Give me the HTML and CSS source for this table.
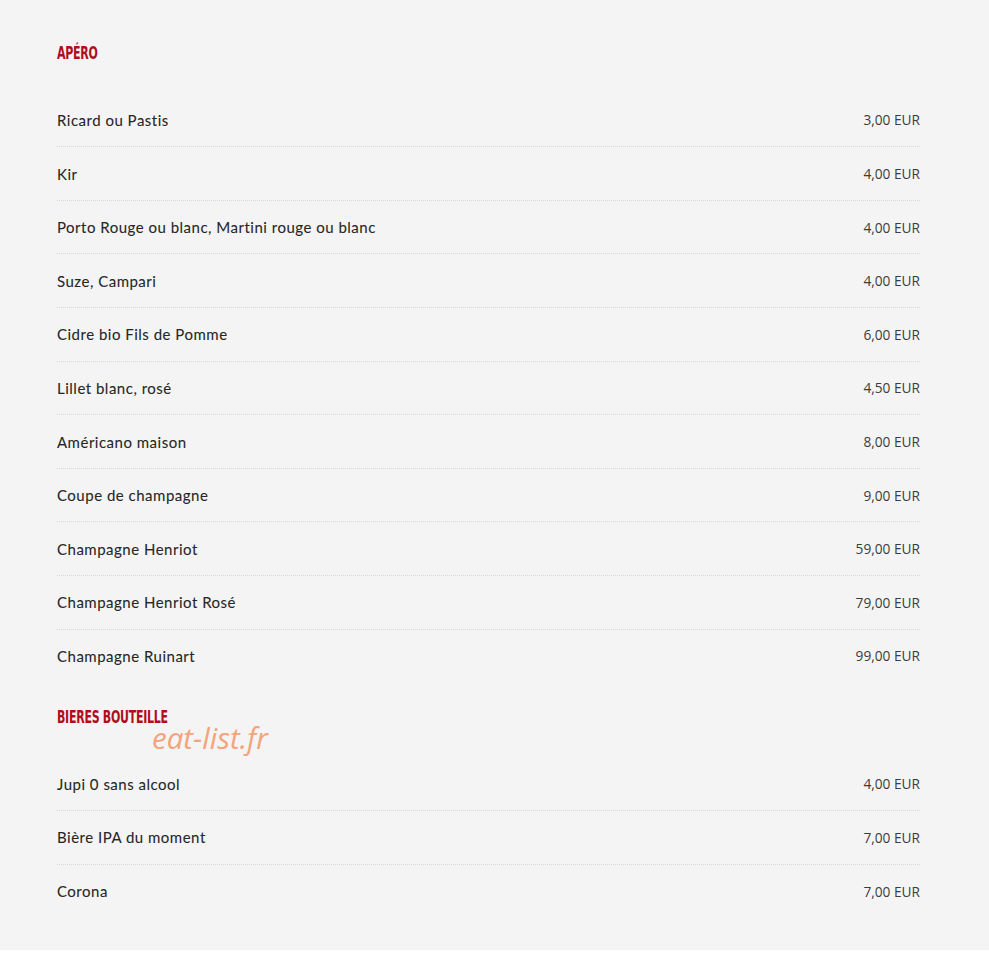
FILE: index.html
```html
<!DOCTYPE html>
<html lang="fr">
<head>
  <meta charset="UTF-8">
  <title>Carte - Apéro</title>
  <link rel="stylesheet" href="styles.css">
</head>
<body>

<div class="carte">
  <h3 class="categorie">APÉRO</h3>
  <ul class="liste">
    <li><span class="nom">Ricard ou Pastis</span><span class="prix">3,00 EUR</span></li>
    <li><span class="nom">Kir</span><span class="prix">4,00 EUR</span></li>
    <li><span class="nom">Porto Rouge ou blanc, Martini rouge ou blanc</span><span class="prix">4,00 EUR</span></li>
    <li><span class="nom">Suze, Campari</span><span class="prix">4,00 EUR</span></li>
    <li><span class="nom">Cidre bio Fils de Pomme</span><span class="prix">6,00 EUR</span></li>
    <li><span class="nom">Lillet blanc, rosé</span><span class="prix">4,50 EUR</span></li>
    <li><span class="nom">Américano maison</span><span class="prix">8,00 EUR</span></li>
    <li><span class="nom">Coupe de champagne</span><span class="prix">9,00 EUR</span></li>
    <li><span class="nom">Champagne Henriot</span><span class="prix">59,00 EUR</span></li>
    <li><span class="nom">Champagne Henriot Rosé</span><span class="prix">79,00 EUR</span></li>
    <li><span class="nom">Champagne Ruinart</span><span class="prix">99,00 EUR</span></li>
  </ul>

  <div class="bloc">
    <h3 class="categorie">BIERES BOUTEILLE</h3>
    <span class="filigrane">eat-list.fr</span>
  </div>
  <ul class="liste">
    <li><span class="nom">Jupi 0 sans alcool</span><span class="prix">4,00 EUR</span></li>
    <li><span class="nom">Bière IPA du moment</span><span class="prix">7,00 EUR</span></li>
    <li><span class="nom">Corona</span><span class="prix">7,00 EUR</span></li>
  </ul>
</div>

</body>
</html>
```

FILE: styles.css
```css
body { margin: 0; background: #fff; }
.carte { background: #f4f4f4; padding: 43px 69px 33px 57px; }
.categorie { margin: 0 0 30.7px; font-family: "DejaVu Sans Condensed", "DejaVu Sans", sans-serif; font-stretch: condensed; font-weight: bold; font-size: 18px; line-height: 20px; color: #b00d1d; letter-spacing: -0.4px; transform: scaleX(0.68); transform-origin: left; }
.liste { list-style: none; margin: 0; padding: 0; }
.liste li { display: flex; justify-content: space-between; align-items: center; height: 52.6px; border-bottom: 1px dotted #d9d9d9; }
.liste li:last-child { border-bottom: none; }
.nom { font-family: Lato, "DejaVu Sans", sans-serif; font-size: 15px; color: #262626; letter-spacing: 0.5px; -webkit-text-stroke: 0.08px #262626; }
.prix { font-family: "Open Sans", "Liberation Sans", sans-serif; font-size: 13.7px; color: #3c3c3c; }
.bloc { position: relative; margin-top: 24.7px; }
.filigrane { position: absolute; left: 95px; top: 10px; font-family: "Open Sans", sans-serif; font-style: italic; font-size: 29.5px; color: #f3a47c; }
```
